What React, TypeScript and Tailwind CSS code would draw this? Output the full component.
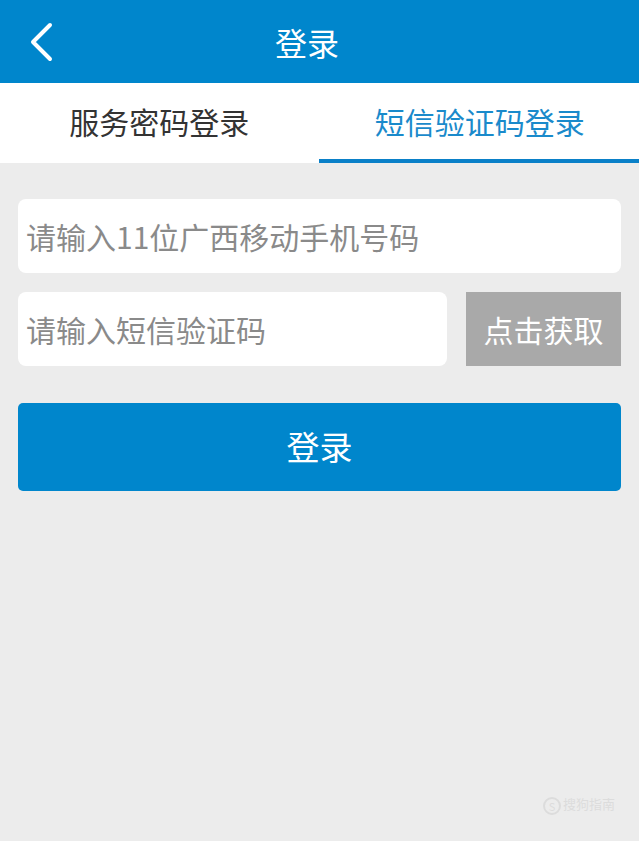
import React from 'react';

const font = { fontFamily: '"Noto Sans CJK SC", "Noto Sans", sans-serif' };

const App: React.FC = () => {
  return (
    <div className="w-[639px] h-[841px] bg-[#ececec] flex flex-col" style={font}>
      {/* header */}
      <div className="h-[83px] bg-[#0086cc] flex items-center relative">
        <svg className="absolute left-[28px] top-[22px]" width="26" height="40" viewBox="0 0 26 40">
          <path d="M22 3 L5 20 L22 37" fill="none" stroke="#fff" strokeWidth="4" strokeLinecap="round" strokeLinejoin="round" />
        </svg>
        <div className="flex-1 text-center text-white text-[32px] leading-none mr-[25px]">登录</div>
      </div>

      {/* tabs */}
      <div className="h-[80px] bg-white flex">
        <div className="flex-1 flex items-center justify-center text-[30px] text-[#333] border-b-4 border-transparent">服务密码登录</div>
        <div className="flex-1 flex items-center justify-center text-[30px] text-[#1a8acb] border-b-4 border-[#0a80c8] pl-[2px]">短信验证码登录</div>
      </div>

      {/* form */}
      <div className="px-[18px] pt-[36px] flex flex-col">
        <div className="h-[74px] bg-white rounded-[8px] flex items-center pl-[8px] text-[30px] text-[#8a8a8a]">
          请输入11位广西移动手机号码
        </div>
        <div className="flex mt-[19px] gap-[19px]">
          <div className="w-[429px] h-[74px] bg-white rounded-[8px] flex items-center pl-[8px] text-[30px] text-[#8a8a8a]">
            请输入短信验证码
          </div>
          <div className="flex-1 h-[74px] bg-[#a9a9a9] flex items-center justify-center text-[30px] text-white">
            点击获取
          </div>
        </div>
        <div className="mt-[37px] h-[88px] bg-[#0086cc] rounded-[5px] flex items-center justify-center text-[33px] text-white">
          登录
        </div>
      </div>

      <div className="flex-1" />
      <div className="flex justify-end pr-[24px] pb-[26px] text-[13px] text-[#dcdcdc] leading-none">
        <span className="border-2 border-[#dcdcdc] rounded-full w-[18px] h-[18px] flex items-center justify-center text-[11px] mr-[2px]">S</span>
        <span>搜狗指南</span>
      </div>
    </div>
  );
};

export default App;
